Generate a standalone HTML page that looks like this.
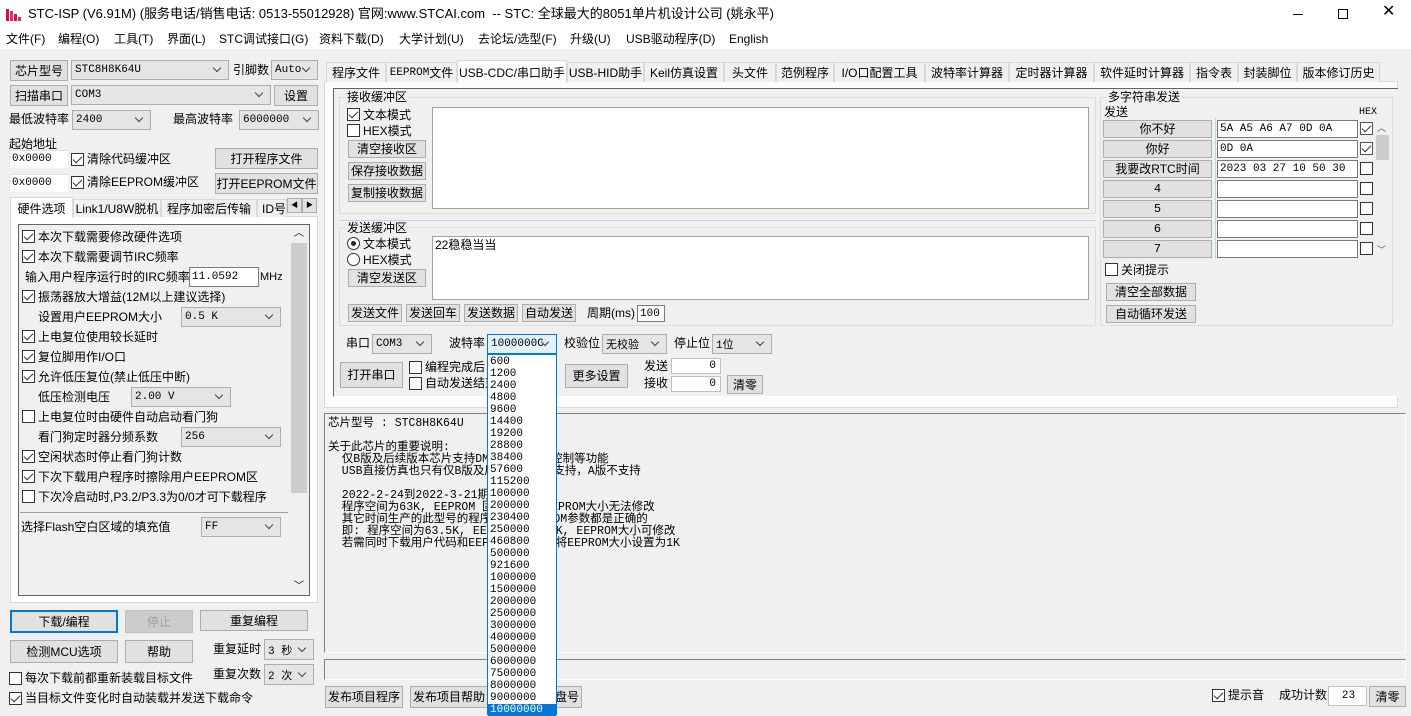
<!DOCTYPE html>
<html><head><meta charset="utf-8"><style>
*{margin:0;padding:0;box-sizing:border-box}
body{width:1411px;height:715px;overflow:hidden;background:#f0f0f0;position:relative;font-family:"Liberation Sans","Noto Sans CJK SC",sans-serif;font-size:12px;color:#000}
.a{position:absolute}
.t{position:absolute;white-space:nowrap;line-height:14px}
.btn{position:absolute;background:#e1e1e1;border:1px solid #adadad;display:flex;align-items:center;justify-content:center;white-space:nowrap;line-height:12px}
.cmb{position:absolute;background:#e5e5e5;border:1px solid #adadad;padding-left:3px;display:flex;align-items:center;white-space:nowrap;font-family:"Liberation Mono","Noto Sans CJK SC",monospace;font-size:11px}
.cmb::after{content:"";position:absolute;right:8px;top:50%;margin-top:-5px;width:5px;height:5px;border:solid #444;border-width:0 1px 1px 0;transform:rotate(45deg);background:#e5e5e5}
.inp{position:absolute;background:#fff;border:1px solid #7a7a7a;padding-left:2px;display:flex;align-items:center;white-space:nowrap;font-family:"Liberation Mono",monospace;font-size:11px}
.cb{position:absolute;width:13px;height:13px;border:1px solid #333;background:#fff}
.on::after{content:"";position:absolute;left:3px;top:0px;width:4px;height:8px;border:solid #333;border-width:0 1.5px 1.5px 0;transform:rotate(45deg)}
.rd{position:absolute;width:13px;height:13px;border:1px solid #333;border-radius:50%;background:#fff}
.tab{position:absolute;top:62px;height:20px;border:1px solid #d9d9d9;border-bottom:none;background:#f0f0f0;display:flex;align-items:center;justify-content:center;white-space:nowrap}
.grp{position:absolute;border:1px solid #dcdcdc}
.mono{font-family:"Liberation Mono","Noto Sans CJK SC",monospace}
.m{position:absolute;top:32px;white-space:nowrap;line-height:14px;font-size:12px}
</style></head><body>
<div class="a" style="left:0;top:0;width:1411px;height:49px;background:#fff"></div>
<svg class="a" style="left:6px;top:7px" width="16" height="14"><rect x="0" y="2" width="3" height="12" fill="#d0104c"/><rect x="4" y="4" width="3" height="10" fill="#e0306c"/><rect x="8" y="7" width="3" height="7" fill="#d0104c"/><rect x="12" y="10" width="3" height="4" fill="#e0306c"/></svg>
<div class="t" style="left:28px;top:7px;font-size:13px">STC-ISP (V6.91M) (服务电话/销售电话: 0513-55012928) 官网:www.STCAI.com&nbsp; -- STC: 全球最大的8051单片机设计公司 (姚永平)</div>
<div class="a" style="left:1293px;top:14px;width:10px;height:1px;background:#000"></div>
<div class="a" style="left:1338px;top:9px;width:10px;height:10px;border:1px solid #000"></div>
<div class="t" style="left:1382px;top:5px;font-size:16px">✕</div>
<div class="m" style="left:6px">文件(F)</div>
<div class="m" style="left:58px">编程(O)</div>
<div class="m" style="left:114px">工具(T)</div>
<div class="m" style="left:167px">界面(L)</div>
<div class="m" style="left:219px">STC调试接口(G)</div>
<div class="m" style="left:319px">资料下载(D)</div>
<div class="m" style="left:399px">大学计划(U)</div>
<div class="m" style="left:478px">去论坛/选型(F)</div>
<div class="m" style="left:570px">升级(U)</div>
<div class="m" style="left:626px">USB驱动程序(D)</div>
<div class="m" style="left:729px">English</div>

<div class="btn" style="left:10px;top:60px;width:58px;height:21px">芯片型号</div>
<div class="cmb" style="left:71px;top:60px;width:158px;height:20px">STC8H8K64U</div>
<div class="t" style="left:233px;top:63px">引脚数</div>
<div class="cmb" style="left:271px;top:60px;width:47px;height:20px">Auto</div>
<div class="btn" style="left:10px;top:85px;width:58px;height:21px">扫描串口</div>
<div class="cmb" style="left:71px;top:85px;width:200px;height:20px">COM3</div>
<div class="btn" style="left:274px;top:85px;width:44px;height:21px">设置</div>
<div class="t" style="left:9px;top:112px">最低波特率</div>
<div class="cmb" style="left:72px;top:110px;width:79px;height:20px">2400</div>
<div class="t" style="left:173px;top:112px">最高波特率</div>
<div class="cmb" style="left:239px;top:110px;width:80px;height:20px">6000000</div>
<div class="t" style="left:9px;top:137px">起始地址</div>
<div class="inp" style="left:9px;top:150px;width:59px;height:18px;border-color:#e0e0e0 #fff #fff #e0e0e0">0x0000</div>
<div class="cb on" style="left:71px;top:153px"></div><div class="t" style="left:87px;top:152px">清除代码缓冲区</div>
<div class="btn" style="left:215px;top:148px;width:103px;height:21px">打开程序文件</div>
<div class="inp" style="left:9px;top:174px;width:59px;height:18px;border-color:#e0e0e0 #fff #fff #e0e0e0">0x0000</div>
<div class="cb on" style="left:71px;top:176px"></div><div class="t" style="left:87px;top:175px">清除EEPROM缓冲区</div>
<div class="btn" style="left:215px;top:173px;width:103px;height:21px">打开EEPROM文件</div>

<div class="a" style="left:10px;top:216px;width:308px;height:387px;background:#fff;border:1px solid #d9d9d9"></div>
<div class="tab" style="left:10px;top:197px;width:63px;height:21px;background:#fff;border-bottom:none">硬件选项</div>
<div class="tab" style="left:73px;top:199px;width:88px;height:18px">Link1/U8W脱机</div>
<div class="tab" style="left:161px;top:199px;width:96px;height:18px">程序加密后传输</div>
<div class="tab" style="left:257px;top:199px;width:30px;height:18px;justify-content:flex-start;padding-left:4px;overflow:hidden">ID号</div>
<div class="btn" style="left:287px;top:198px;width:15px;height:15px;font-size:7px">◀</div>
<div class="btn" style="left:302px;top:198px;width:15px;height:15px;font-size:7px">▶</div>
<div class="a" style="left:18px;top:224px;width:292px;height:372px;background:#f0f0f0;border:1px solid #646464"></div>
<div class="a" style="left:290px;top:225px;width:19px;height:370px;background:#f0f0f0"></div>
<div class="a" style="left:291px;top:243px;width:16px;height:250px;background:#cdcdcd"></div>
<div class="t" style="left:294px;top:227px;font-size:10px">︿</div>
<div class="t" style="left:294px;top:580px;font-size:10px">﹀</div>
<div class="cb on" style="left:22px;top:230px"></div><div class="t" style="left:38px;top:230px">本次下载需要修改硬件选项</div>
<div class="cb on" style="left:22px;top:250px"></div><div class="t" style="left:38px;top:250px">本次下载需要调节IRC频率</div>
<div class="t" style="left:25px;top:270px">输入用户程序运行时的IRC频率</div>
<div class="inp" style="left:189px;top:267px;width:70px;height:20px">11.0592</div><div class="t" style="left:260px;top:270px;font-size:11px">MHz</div>
<div class="cb on" style="left:22px;top:290px"></div><div class="t" style="left:38px;top:290px">振荡器放大增益(12M以上建议选择)</div>
<div class="t" style="left:38px;top:310px">设置用户EEPROM大小</div><div class="cmb" style="left:181px;top:307px;width:100px;height:20px">0.5 K</div>
<div class="cb on" style="left:22px;top:330px"></div><div class="t" style="left:38px;top:330px">上电复位使用较长延时</div>
<div class="cb on" style="left:22px;top:350px"></div><div class="t" style="left:38px;top:350px">复位脚用作I/O口</div>
<div class="cb on" style="left:22px;top:370px"></div><div class="t" style="left:38px;top:370px">允许低压复位(禁止低压中断)</div>
<div class="t" style="left:38px;top:390px">低压检测电压</div><div class="cmb" style="left:131px;top:387px;width:100px;height:20px">2.00 V</div>
<div class="cb" style="left:22px;top:410px"></div><div class="t" style="left:38px;top:410px">上电复位时由硬件自动启动看门狗</div>
<div class="t" style="left:38px;top:430px">看门狗定时器分频系数</div><div class="cmb" style="left:181px;top:427px;width:100px;height:20px">256</div>
<div class="cb on" style="left:22px;top:450px"></div><div class="t" style="left:38px;top:450px">空闲状态时停止看门狗计数</div>
<div class="cb on" style="left:22px;top:470px"></div><div class="t" style="left:38px;top:470px">下次下载用户程序时擦除用户EEPROM区</div>
<div class="cb" style="left:22px;top:490px"></div><div class="t" style="left:38px;top:490px">下次冷启动时,P3.2/P3.3为0/0才可下载程序</div>
<div class="a" style="left:20px;top:512px;width:268px;height:1px;background:#a0a0a0"></div>
<div class="t" style="left:21px;top:520px">选择Flash空白区域的填充值</div><div class="cmb" style="left:201px;top:517px;width:80px;height:20px">FF</div>

<div class="btn" style="left:10px;top:610px;width:108px;height:23px;border:2px solid #0078d7">下载/编程</div>
<div class="btn" style="left:125px;top:610px;width:68px;height:23px;background:#ccc;border-color:#bfbfbf;color:#a0a0a0">停止</div>
<div class="btn" style="left:200px;top:610px;width:108px;height:21px">重复编程</div>
<div class="btn" style="left:10px;top:640px;width:108px;height:23px">检测MCU选项</div>
<div class="btn" style="left:125px;top:640px;width:68px;height:23px">帮助</div>
<div class="t" style="left:213px;top:642px">重复延时</div><div class="cmb" style="left:264px;top:639px;width:50px;height:21px">3 秒</div>
<div class="t" style="left:213px;top:667px">重复次数</div><div class="cmb" style="left:264px;top:664px;width:50px;height:21px">2 次</div>
<div class="cb" style="left:9px;top:672px"></div><div class="t" style="left:25px;top:671px">每次下载前都重新装载目标文件</div>
<div class="cb on" style="left:9px;top:692px"></div><div class="t" style="left:25px;top:691px">当目标文件变化时自动装载并发送下载命令</div>

<div class="a" style="left:324px;top:81px;width:1074px;height:327px;background:#fcfcfc;border:1px solid #d9d9d9"></div>
<div class="tab" style="left:326px;width:60px">程序文件</div>
<div class="tab" style="left:386px;width:71px"><span class="mono" style="font-size:11px">EEPROM</span>文件</div>
<div class="tab" style="left:457px;top:60px;width:110px;height:23px;background:#fcfcfc">USB-CDC/串口助手</div>
<div class="tab" style="left:567px;width:77px">USB-HID助手</div>
<div class="tab" style="left:644px;width:80px">Keil仿真设置</div>
<div class="tab" style="left:724px;width:52px">头文件</div>
<div class="tab" style="left:776px;width:58px">范例程序</div>
<div class="tab" style="left:834px;width:91px">I/O口配置工具</div>
<div class="tab" style="left:925px;width:84px">波特率计算器</div>
<div class="tab" style="left:1009px;width:85px">定时器计算器</div>
<div class="tab" style="left:1094px;width:96px">软件延时计算器</div>
<div class="tab" style="left:1190px;width:48px">指令表</div>
<div class="tab" style="left:1238px;width:59px">封装脚位</div>
<div class="tab" style="left:1297px;width:83px">版本修订历史</div>
<div class="a" style="left:333px;top:88px;width:1065px;height:309px;background:#f0f0f0;border:1px solid #646464;border-right:none;border-bottom-color:#fff"></div>

<div class="grp" style="left:339px;top:97px;width:757px;height:117px"></div>
<div class="t" style="left:345px;top:90px;background:#f0f0f0;padding:0 2px">接收缓冲区</div>
<div class="cb on" style="left:347px;top:108px"></div><div class="t" style="left:363px;top:108px">文本模式</div>
<div class="cb" style="left:347px;top:124px"></div><div class="t" style="left:363px;top:124px">HEX模式</div>
<div class="btn" style="left:348px;top:140px;width:78px;height:18px">清空接收区</div>
<div class="btn" style="left:348px;top:162px;width:78px;height:18px">保存接收数据</div>
<div class="btn" style="left:348px;top:184px;width:78px;height:18px">复制接收数据</div>
<div class="a" style="left:432px;top:107px;width:657px;height:102px;background:#fff;border:1px solid #a0a0a0"></div>
<div class="a" style="left:339px;top:220px;width:757px;height:1px;background:#b8d8ee"></div>
<div class="grp" style="left:339px;top:227px;width:757px;height:99px"></div>
<div class="t" style="left:345px;top:221px;background:#f0f0f0;padding:0 2px">发送缓冲区</div>
<div class="rd" style="left:347px;top:237px"><div class="a" style="left:3px;top:3px;width:5px;height:5px;border-radius:50%;background:#222"></div></div><div class="t" style="left:363px;top:237px">文本模式</div>
<div class="rd" style="left:347px;top:253px"></div><div class="t" style="left:363px;top:253px">HEX模式</div>
<div class="btn" style="left:348px;top:269px;width:78px;height:18px">清空发送区</div>
<div class="a" style="left:432px;top:236px;width:657px;height:64px;background:#fff;border:1px solid #a0a0a0"></div>
<div class="t" style="left:435px;top:238px">22稳稳当当</div>
<div class="btn" style="left:348px;top:304px;width:54px;height:18px">发送文件</div>
<div class="btn" style="left:406px;top:304px;width:54px;height:18px">发送回车</div>
<div class="btn" style="left:464px;top:304px;width:54px;height:18px">发送数据</div>
<div class="btn" style="left:522px;top:304px;width:54px;height:18px">自动发送</div>
<div class="t" style="left:587px;top:306px">周期(ms)</div>
<div class="inp" style="left:637px;top:305px;width:28px;height:17px">100</div>

<div class="t" style="left:346px;top:336px">串口</div><div class="cmb" style="left:372px;top:334px;width:60px;height:20px">COM3</div>
<div class="t" style="left:449px;top:336px">波特率</div><div class="cmb" style="left:487px;top:334px;width:70px;height:20px;border-color:#0078d7;background:#e5f1fb">1000000C</div>
<div class="t" style="left:564px;top:336px">校验位</div><div class="cmb" style="left:602px;top:334px;width:65px;height:20px">无校验</div>
<div class="t" style="left:674px;top:336px">停止位</div><div class="cmb" style="left:712px;top:334px;width:60px;height:20px">1位</div>
<div class="btn" style="left:340px;top:362px;width:63px;height:26px">打开串口</div>
<div class="cb" style="left:409px;top:361px"></div><div class="t" style="left:425px;top:360px">编程完成后自</div>
<div class="cb" style="left:409px;top:377px"></div><div class="t" style="left:425px;top:376px">自动发送结束</div>
<div class="btn" style="left:565px;top:364px;width:63px;height:24px">更多设置</div>
<div class="t" style="left:644px;top:359px">发送</div><div class="inp" style="left:671px;top:358px;width:50px;height:16px;justify-content:flex-end;padding-right:4px;border-color:#c0c0c0">0</div>
<div class="t" style="left:644px;top:376px">接收</div><div class="inp" style="left:671px;top:376px;width:50px;height:16px;justify-content:flex-end;padding-right:4px;border-color:#c0c0c0">0</div>
<div class="btn" style="left:727px;top:375px;width:36px;height:19px">清零</div>

<div class="grp" style="left:1100px;top:97px;width:293px;height:229px"></div>
<div class="t" style="left:1106px;top:90px;background:#f0f0f0;padding:0 2px">多字符串发送</div>
<div class="t" style="left:1104px;top:105px">发送</div>
<div class="t mono" style="left:1359px;top:106px;font-size:10px">HEX</div>
<div class="a" style="left:1215px;top:118px;width:1px;height:140px;background:#b8d8ee"></div>
<div class="btn" style="left:1103px;top:120px;width:109px;height:18px">你不好</div><div class="inp" style="left:1217px;top:120px;width:141px;height:18px">5A A5 A6 A7 0D 0A</div><div class="cb on" style="left:1360px;top:122px;border-color:#555"></div>
<div class="btn" style="left:1103px;top:140px;width:109px;height:18px">你好</div><div class="inp" style="left:1217px;top:140px;width:141px;height:18px">0D 0A</div><div class="cb on" style="left:1360px;top:142px;border-color:#555"></div>
<div class="btn" style="left:1103px;top:160px;width:109px;height:18px">我要改RTC时间</div><div class="inp" style="left:1217px;top:160px;width:141px;height:18px">2023 03 27 10 50 30</div><div class="cb" style="left:1360px;top:162px"></div>
<div class="btn mono" style="left:1103px;top:180px;width:109px;height:18px">4</div><div class="inp" style="left:1217px;top:180px;width:141px;height:18px"></div><div class="cb" style="left:1360px;top:182px"></div>
<div class="btn mono" style="left:1103px;top:200px;width:109px;height:18px">5</div><div class="inp" style="left:1217px;top:200px;width:141px;height:18px"></div><div class="cb" style="left:1360px;top:202px"></div>
<div class="btn mono" style="left:1103px;top:220px;width:109px;height:18px">6</div><div class="inp" style="left:1217px;top:220px;width:141px;height:18px"></div><div class="cb" style="left:1360px;top:222px"></div>
<div class="btn mono" style="left:1103px;top:240px;width:109px;height:18px">7</div><div class="inp" style="left:1217px;top:240px;width:141px;height:18px"></div><div class="cb" style="left:1360px;top:242px"></div>
<div class="a" style="left:1376px;top:135px;width:13px;height:25px;background:#cdcdcd"></div>
<div class="t" style="left:1377px;top:121px;font-size:9px;color:#555">︿</div>
<div class="t" style="left:1377px;top:243px;font-size:9px;color:#555">﹀</div>
<div class="cb" style="left:1105px;top:263px"></div><div class="t" style="left:1121px;top:263px">关闭提示</div>
<div class="btn" style="left:1106px;top:283px;width:90px;height:18px">清空全部数据</div>
<div class="btn" style="left:1106px;top:305px;width:90px;height:18px">自动循环发送</div>

<div class="a" style="left:324px;top:413px;width:1082px;height:240px;border:1px solid #828282;border-right-color:#fff;border-bottom-color:#fff"></div>
<div class="a mono" style="left:328px;top:418px;font-size:11.5px;line-height:12px;white-space:pre">芯片型号 : STC8H8K64U

关于此芯片的重要说明:
  仅B版及后续版本芯片支持DMA和TFT彩屏控制等功能
  USB直接仿真也只有仅B版及后续版本芯片支持，A版不支持

  2022-2-24到2022-3-21期间生产的芯片
  程序空间为63K, EEPROM 固定为1K, EEPROM大小无法修改
  其它时间生产的此型号的程序空间和EEPROM参数都是正确的
  即: 程序空间为63.5K, EEPROM空间为1K, EEPROM大小可修改
  若需同时下载用户代码和EEPROM数据，请将EEPROM大小设置为1K</div>
<div class="a" style="left:324px;top:659px;width:1082px;height:21px;border:1px solid #828282;border-right-color:#fff;border-bottom-color:#fff"></div>
<div class="btn" style="left:325px;top:686px;width:78px;height:22px">发布项目程序</div>
<div class="btn" style="left:410px;top:686px;width:78px;height:22px">发布项目帮助</div>
<div class="btn" style="left:492px;top:686px;width:90px;height:22px">读取本机硬盘号</div>
<div class="cb on" style="left:1212px;top:689px"></div><div class="t" style="left:1228px;top:688px">提示音</div>
<div class="t" style="left:1279px;top:688px">成功计数</div>
<div class="inp" style="left:1328px;top:686px;width:39px;height:20px;justify-content:center;border-color:#c0c0c0">23</div>
<div class="btn" style="left:1369px;top:686px;width:37px;height:21px">清零</div>

<div class="a mono" style="left:487px;top:354px;width:70px;height:361px;background:#fff;border:1px solid #0078d7;font-size:11px;line-height:12px;padding-left:2px;padding-top:1px;white-space:pre">600
1200
2400
4800
9600
14400
19200
28800
38400
57600
115200
100000
200000
230400
250000
460800
500000
921600
1000000
1500000
2000000
2500000
3000000
4000000
5000000
6000000
7500000
8000000
9000000
<span style="display:block;margin-left:-2px;padding-left:2px;background:#0078d7;color:#fff">10000000</span></div>
</body></html>
